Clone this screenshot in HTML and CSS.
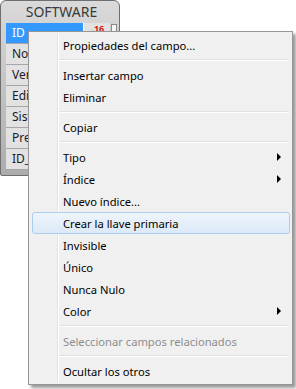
FILE: index.html
```html
<!DOCTYPE html>
<html lang="es">
<head>
  <meta charset="UTF-8" />
  <title>SOFTWARE - menú de campo</title>
  <link rel="stylesheet" href="styles.css">
</head>
<body>
  <div class="table-win">
    <div class="title">SOFTWARE</div>
    <div class="body">
      <ul class="fields">
        <li class="selected"><span class="name">ID</span><span class="key"><b>-</b>16</span></li>
        <li><span class="name">Nombre</span><span class="key"></span></li>
        <li><span class="name">Version</span><span class="key"></span></li>
        <li><span class="name">Editor</span><span class="key"></span></li>
        <li><span class="name">Sistema</span><span class="key"></span></li>
        <li><span class="name">Precio</span><span class="key"></span></li>
        <li><span class="name">ID_Tipo</span><span class="key"></span></li>
      </ul>
      <div class="scroll"><div class="thumb"></div></div>
    </div>
  </div>

  <ul class="menu">
    <li>Propiedades del campo...</li>
    <li class="sep"></li>
    <li>Insertar campo</li>
    <li>Eliminar</li>
    <li class="sep"></li>
    <li>Copiar</li>
    <li class="sep"></li>
    <li>Tipo <span class="arrow"></span></li>
    <li>Índice <span class="arrow"></span></li>
    <li>Nuevo índice...</li>
    <li class="hover">Crear la llave primaria</li>
    <li>Invisible</li>
    <li>Único</li>
    <li>Nunca Nulo</li>
    <li>Color <span class="arrow"></span></li>
    <li class="sep"></li>
    <li class="disabled">Seleccionar campos relacionados</li>
    <li class="sep"></li>
    <li>Ocultar los otros</li>
  </ul>
</body>
</html>
```

FILE: styles.css
```css
body {
  margin: 0;
  padding: 0;
  background-color: #fff;
  font-family: "Noto Sans", "Open Sans", sans-serif;
  font-size: 11.2px;
  color: #000;
}
.table-win {
  box-sizing: border-box;
  width: 120px;
  height: 176px;
  border: 1px solid #6f6f6f;
  border-radius: 6px 6px 2px 2px;
  background: linear-gradient(#dadada, #acacac);
  padding: 0 2px 5px 5px;
}
.title {
  height: 22px;
  line-height: 22px;
  text-align: center;
  font-size: 14px;
  color: #3a3a3a;
}
.body {
  display: flex;
  height: 147px;
}
.fields {
  list-style: none;
  margin: 0;
  padding: 0;
  width: 104px;
}
.fields li {
  display: flex;
  height: 20px;
  border-bottom: 1px solid #a6a6a6;
  background-color: #e2e2e2;
}
.fields .name {
  width: 71px;
  padding-left: 6px;
  line-height: 20px;
  font-size: 12px;
  color: #1a1a2a;
  border-right: 1px solid #fff;
}
.fields .selected .name {
  background-color: #3399ff;
  color: #fff;
}
.fields .key {
  flex: 1;
  padding: 1px 0 0 7px;
  font-size: 9px;
  font-weight: bold;
  line-height: 9px;
  color: #d21414;
}
.fields .key b {
  color: #222;
  position: relative;
  top: 2px;
}
.scroll {
  width: 7px;
  background-color: #cfcfcf;
}
.thumb {
  box-sizing: border-box;
  width: 6px;
  height: 9px;
  margin: 1px 0 0 1px;
  border: 1px solid #8a8a8a;
  background-color: #f4f4f4;
}

/* context menu */
.menu {
  position: absolute;
  left: 28px;
  top: 31px;
  box-sizing: border-box;
  width: 265px;
  margin: 0;
  padding: 2px;
  list-style: none;
  border: 1px solid #979797;
  background-color: #f0f0f0;
  box-shadow: 3px 3px 3px rgba(0, 0, 0, 0.4);
}
.menu::before {
  content: "";
  position: absolute;
  left: 28px;
  top: 2px;
  bottom: 2px;
  width: 1px;
  background-color: #e2e3e3;
  border-right: 1px solid #fff;
}
.menu li {
  position: relative;
  display: flex;
  align-items: center;
  height: 22px;
  padding-left: 32px;
}
.menu li.sep {
  height: 8px;
  padding: 0;
}
.menu li.sep::after {
  content: "";
  position: absolute;
  left: 28px;
  right: 1px;
  top: 3px;
  height: 1px;
  background-color: #e0e0e0;
  border-bottom: 1px solid #fff;
}
.menu li.hover {
  z-index: 1;
  margin: 0 0 0 1px;
  height: 20px;
  padding-left: 30px;
  border: 1px solid #a9cdef;
  border-radius: 3px;
  background: linear-gradient(#eef5fd, #dce9f7);
}
.menu li.disabled {
  color: #8d8d8d;
}
.arrow {
  margin-left: auto;
  margin-right: 9px;
  width: 0;
  height: 0;
  border-left: 4px solid #000;
  border-top: 4px solid transparent;
  border-bottom: 4px solid transparent;
}
```
